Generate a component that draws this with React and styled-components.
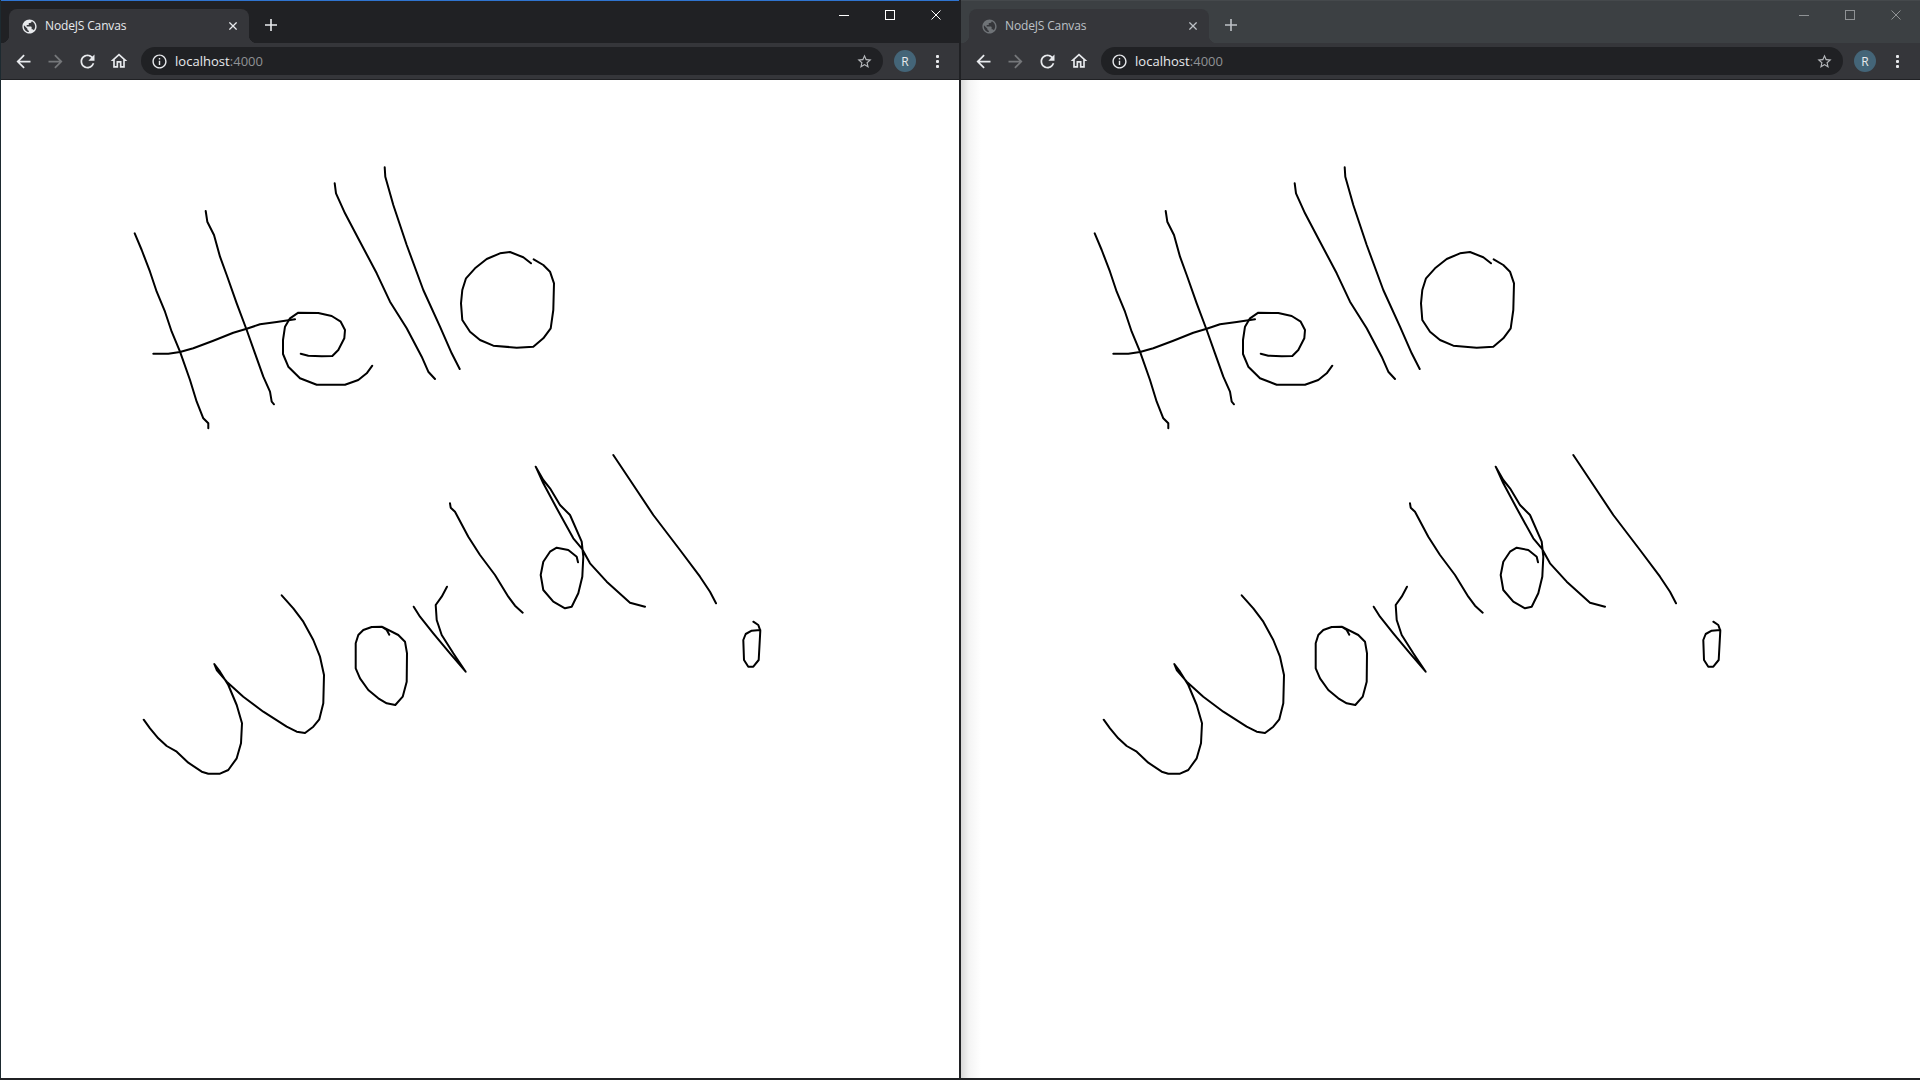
import React from 'react';
import styled, { createGlobalStyle } from 'styled-components';

const GlobalStyle = createGlobalStyle`
  html, body { margin: 0; padding: 0; background: #202124; }
  body { width: 1920px; height: 1080px; overflow: hidden; font-family: 'Open Sans', 'Noto Sans', sans-serif; }
`;

// ---- Styled Components ----
const Desktop = styled.div`
  display: flex;
  width: 1920px;
  height: 1080px;
  background: #202124;
`;

const BrowserWindow = styled.div`
  display: flex;
  flex-direction: column;
  flex: none;
  box-sizing: border-box;
  width: ${({ $active }) => ($active ? '961px' : '959px')};
  height: 1078px;
  border-left: ${({ $active }) => ($active ? '1px solid #1d2a30' : '0')};
  border-right: ${({ $active }) => ($active ? '2px solid #202124' : '0')};
  background: #fff;
`;

const TitleBar = styled.div`
  display: flex;
  flex: none;
  height: 43px;
  box-sizing: border-box;
  padding: 9px ${({ $active }) => ($active ? '0' : '1px')} 0 8px;
  background: ${({ $active }) => ($active ? '#202124' : '#3c4043')};
  border-top: ${({ $active }) => ($active ? '1px solid #2f74d0' : '1px solid #45494c')};
`;

const Tab = styled.div`
  position: relative;
  display: flex;
  align-items: center;
  width: 240px;
  height: 34px;
  margin-top: -1px;
  box-sizing: border-box;
  padding: 0 12px 0 12px;
  background: #35363a;
  border-radius: 8px 8px 0 0;
  color: ${({ $active }) => ($active ? '#e8eaed' : '#bdc1c6')};
  font-size: 12px;

  &::before,
  &::after {
    content: '';
    position: absolute;
    bottom: 0;
    width: 8px;
    height: 8px;
  }

  &::before {
    left: -8px;
    background: radial-gradient(circle at 0 0, transparent 8px, #35363a 8.5px);
  }

  &::after {
    right: -8px;
    background: radial-gradient(circle at 100% 0, transparent 8px, #35363a 8.5px);
  }
`;

const Favicon = styled.span`
  display: flex;
  color: ${({ $active }) => ($active ? '#e8eaed' : '#6f7377')};
`;

const TabTitle = styled.span`
  flex: 1;
  margin-left: 7px;
  margin-top: -1px;
  white-space: nowrap;
  letter-spacing: -0.15px;
`;

const NewTab = styled.div`
  display: flex;
  align-items: center;
  justify-content: center;
  width: 28px;
  height: 30px;
  margin: 0 0 0 8px;
  color: ${({ $active }) => ($active ? '#e8eaed' : '#bdc1c6')};
`;

const Caption = styled.div`
  display: flex;
  margin-left: auto;
  margin-top: -9px;
  color: ${({ $active }) => ($active ? '#fff' : '#8f9295')};
`;

const CaptionButton = styled.div`
  display: flex;
  align-items: center;
  justify-content: center;
  width: 46px;
  height: 30px;
  margin-top: -1px;
`;

const Toolbar = styled.div`
  display: flex;
  flex: none;
  align-items: center;
  height: 36px;
  padding: 0 0 0 6px;
  background: #35363a;
  border-bottom: 1px solid #202124;
`;

const NavButton = styled.div`
  display: flex;
  align-items: center;
  justify-content: center;
  width: 32px;
  height: 32px;
  color: ${({ $disabled }) => ($disabled ? '#75777a' : '#e8eaed')};
`;

const Omnibox = styled.div`
  display: flex;
  align-items: center;
  flex: none;
  width: 742px;
  height: 28px;
  margin-left: 6px;
  padding: 0 10px 0 10px;
  box-sizing: border-box;
  border-radius: 14px;
  background: #202124;
  color: #e8eaed;
`;

const UrlText = styled.span`
  margin-left: 7px;
  font-size: 13px;
  letter-spacing: 0.03px;
  color: #e8eaed;
`;

const UrlPort = styled.span`
  color: #8f9194;
`;

const StarButton = styled.div`
  display: flex;
  margin-left: auto;
  color: #b5b8bb;
`;

const Avatar = styled.div`
  display: flex;
  align-items: center;
  justify-content: center;
  flex: none;
  width: 22px;
  height: 22px;
  margin-left: 11px;
  border-radius: 50%;
  background: #446578;
  color: #e8eaed;
  font-size: 12px;
`;

const MenuDots = styled.div`
  display: flex;
  flex-direction: column;
  gap: 2px;
  margin-left: 20px;
`;

const Dot = styled.span`
  width: 3px;
  height: 3px;
  border-radius: 1px;
  background: #e8eaed;
`;

const Canvas = styled.div`
  flex: 1;
  min-height: 0;
  background: ${({ $active }) =>
    $active ? '#fff' : 'linear-gradient(90deg, #d8d8d8 0, #f4f4f4 8px, #fff 20px)'};
`;

const Drawing = styled.svg`
  display: block;
  height: 998px;
`;

const Stroke = styled.polyline`
  fill: none;
  stroke: #000;
  stroke-width: 2;
  stroke-linecap: round;
  stroke-linejoin: round;
`;

// ---- Data ----
// points were traced off 3x crops, so each group carries the crop's origin
const HELLO = [
  [104,250, 125,300, 150,365, 170,425, 195,485, 215,545, 240,605, 270,690, 290,755, 310,805, 325,820, 325,835],
  [317,183, 322,215, 342,255, 360,320, 380,375, 410,460, 440,540, 465,610, 490,680, 510,725, 515,755, 522,763],
  [160,611, 205,611, 240,606, 280,595, 340,572, 400,548, 440,536, 480,523, 530,516, 585,508],
  [602,611, 625,617, 665,619, 697,618, 715,600, 733,565, 735,540, 722,515, 695,498, 655,489, 595,488, 570,505, 555,530, 549,570, 549,612, 565,650, 600,685, 650,704, 735,704, 775,690, 800,670, 817,647],
  [704,100, 708,130, 735,190, 780,275, 830,370, 870,455, 920,535, 965,620, 985,665, 1005,687],
  [854,52, 856,80, 880,165, 920,285, 970,420, 1020,530, 1055,610, 1079,657],
  [1293,340, 1270,322, 1230,306, 1200,310, 1160,327, 1125,355, 1098,385, 1087,420, 1083,460, 1087,510, 1110,545, 1140,570, 1180,587, 1250,593, 1300,590, 1330,565, 1352,535, 1360,480, 1362,400, 1350,365, 1330,345, 1301,328],
];

const WO = [
  [71,839, 90,865, 115,895, 140,918, 170,935, 205,968, 245,995, 265,1001, 300,1001, 325,990, 350,955, 363,910, 366,850, 350,795, 325,735, 300,695, 283,672, 290,690, 320,725, 370,770, 430,815, 500,860, 530,875, 555,879, 580,860, 598,838, 610,790, 612,705, 600,650, 580,600, 550,545, 520,505, 485,466],
  [808,584, 800,570, 785,560, 755,561, 730,570, 715,585, 707,610, 707,685, 720,715, 745,750, 775,775, 800,790, 826,795, 848,770, 860,725, 861,640, 855,605, 835,585, 790,562],
];

const RLD = [
  [41,500, 60,530, 100,580, 150,640, 197,695, 160,640, 125,585, 110,540, 107,495, 125,470, 141,440],
  [150,190, 152,203, 165,215, 205,290, 240,345, 285,405, 325,470, 345,497, 368,518],
  [534,367, 530,350, 505,330, 470,323, 450,335, 430,365, 422,405, 430,450, 460,485, 495,505, 515,500, 535,460, 547,410, 550,350, 545,305, 510,225, 480,195, 450,145, 430,120, 407,80, 430,130, 470,205, 520,295, 545,325, 570,370, 620,425, 690,488, 735,500],
  [640,45, 690,120, 760,225, 840,330, 900,410, 930,455, 948,490],
  [1060,545, 1075,555, 1081,572, 1076,660, 1060,680, 1045,680, 1032,660, 1030,600, 1037,582, 1055,572, 1081,570],
];

const toPoints = (ox, oy, flat) => {
  const out = [];
  for (let i = 0; i < flat.length; i += 2) {
    out.push(`${(ox + flat[i] / 3).toFixed(1)},${(oy + flat[i + 1] / 3).toFixed(1)}`);
  }
  return out.join(' ');
};

const STROKES = [
  ...HELLO.map((s) => toPoints(100, 150, s)),
  ...WO.map((s) => toPoints(120, 440, s)),
  ...RLD.map((s) => toPoints(400, 440, s)),
];

const ICONS = {
  globe: 'M12 2C6.48 2 2 6.48 2 12s4.48 10 10 10 10-4.48 10-10S17.52 2 12 2zm-1 17.93c-3.95-.49-7-3.85-7-7.93 0-.62.08-1.21.21-1.79L9 15v1c0 1.1.9 2 2 2v1.93zm6.9-2.54c-.26-.81-1-1.39-1.9-1.39h-1v-3c0-.55-.45-1-1-1H8v-2h2c.55 0 1-.45 1-1V7h2c1.1 0 2-.9 2-2v-.41c2.93 1.19 5 4.06 5 7.41 0 2.08-.8 3.97-2.1 5.39z',
  arrow: 'M20 11H7.83l5.59-5.59L12 4l-8 8 8 8 1.41-1.41L7.83 13H20v-2z',
  reload: 'M17.65 6.35C16.2 4.9 14.21 4 12 4c-4.42 0-7.99 3.58-7.99 8s3.57 8 7.99 8c3.73 0 6.84-2.55 7.73-6h-2.08c-.82 2.33-3.04 4-5.65 4-3.31 0-6-2.69-6-6s2.69-6 6-6c1.66 0 3.14.69 4.22 1.78L13 11h7V4l-2.35 2.35z',
  home: 'M12 5.69l5 4.5V18h-2v-6H9v6H7v-7.81l5-4.5M12 3L2 12h3v8h6v-6h2v6h6v-8h3L12 3z',
  info: 'M11 7h2v2h-2zm0 4h2v6h-2zm1-9C6.48 2 2 6.48 2 12s4.48 10 10 10 10-4.48 10-10S17.52 2 12 2zm0 18c-4.41 0-8-3.59-8-8s3.59-8 8-8 8 3.59 8 8-3.59 8-8 8z',
  star: 'M22 9.24l-7.19-.62L12 2 9.19 8.63 2 9.24l5.46 4.73L5.82 21 12 17.27 18.18 21l-1.63-7.03L22 9.24zM12 15.4l-3.76 2.27 1-4.28-3.32-2.88 4.38-.38L12 6.1l1.71 4.04 4.38.38-3.32 2.88 1 4.28L12 15.4z',
};

// ---- Component ----
const Icon = ({ name, size = 16, flip }) => (
  <svg width={size} height={size} viewBox="0 0 24 24" style={flip ? { transform: 'scaleX(-1)' } : undefined}>
    <path d={ICONS[name]} fill="currentColor" />
  </svg>
);

const Cross = ({ size = 10, width = 1 }) => (
  <svg width={size} height={size} viewBox="0 0 10 10">
    <path d="M0.5 0.5 9.5 9.5M9.5 0.5 0.5 9.5" stroke="currentColor" strokeWidth={width} fill="none" />
  </svg>
);

const Browser = ({ active }) => (
  <BrowserWindow $active={active}>
    <TitleBar $active={active}>
      <Tab $active={active}>
        <Favicon $active={active}>
          <Icon name="globe" size={17} />
        </Favicon>
        <TabTitle>NodeJS Canvas</TabTitle>
        <Cross size={8} width={1.6} />
      </Tab>
      <NewTab $active={active}>
        <svg width="12" height="12" viewBox="0 0 12 12">
          <path d="M6 0v12M0 6h12" stroke="currentColor" strokeWidth="1.6" />
        </svg>
      </NewTab>
      <Caption $active={active}>
        <CaptionButton>
          <svg width="10" height="10" viewBox="0 0 10 10">
            <path d="M0 5.5h10" stroke="currentColor" />
          </svg>
        </CaptionButton>
        <CaptionButton>
          <svg width="10" height="10" viewBox="0 0 10 10">
            <rect x="0.5" y="0.5" width="9" height="9" stroke="currentColor" fill="none" />
          </svg>
        </CaptionButton>
        <CaptionButton>
          <Cross />
        </CaptionButton>
      </Caption>
    </TitleBar>
    <Toolbar>
      <NavButton><Icon name="arrow" size={21} /></NavButton>
      <NavButton $disabled><Icon name="arrow" size={21} flip /></NavButton>
      <NavButton><Icon name="reload" size={21} /></NavButton>
      <NavButton><Icon name="home" size={20} /></NavButton>
      <Omnibox>
        <Icon name="info" size={17} />
        <UrlText>localhost<UrlPort>:4000</UrlPort></UrlText>
        <StarButton><Icon name="star" size={17} /></StarButton>
      </Omnibox>
      <Avatar>R</Avatar>
      <MenuDots><Dot /><Dot /><Dot /></MenuDots>
    </Toolbar>
    <Canvas $active={active}>
      <Drawing viewBox="1 80 958 998" width="958">
        {STROKES.map((points, i) => (
          <Stroke key={i} points={points} />
        ))}
      </Drawing>
    </Canvas>
  </BrowserWindow>
);

const App = () => (
  <>
    <GlobalStyle />
    <Desktop>
      <Browser active />
      <Browser />
    </Desktop>
  </>
);

export default App;
